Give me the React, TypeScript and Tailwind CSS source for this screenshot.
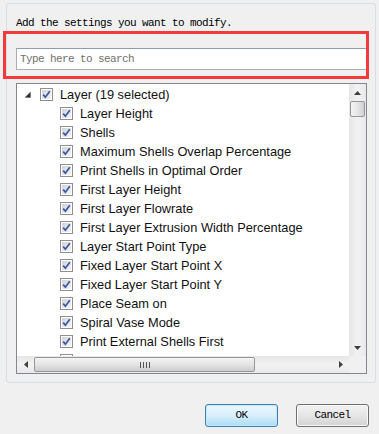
import React from "react";

// Win7-style "add settings" dialog with a checkbox tree
const items = [
  "Layer Height",
  "Shells",
  "Maximum Shells Overlap Percentage",
  "Print Shells in Optimal Order",
  "First Layer Height",
  "First Layer Flowrate",
  "First Layer Extrusion Width Percentage",
  "Layer Start Point Type",
  "Fixed Layer Start Point X",
  "Fixed Layer Start Point Y",
  "Place Seam on",
  "Spiral Vase Mode",
  "Print External Shells First",
  "Print Infill First",
];

const CheckBox = () => (
  <svg width="13" height="13" viewBox="0 0 13 13" className="shrink-0">
    <defs>
      <linearGradient id="cbg" x1="0" y1="0" x2="1" y2="1">
        <stop offset="0" stopColor="#cfd3d9" />
        <stop offset="1" stopColor="#f4f4f4" />
      </linearGradient>
    </defs>
    <rect x="0.5" y="0.5" width="12" height="12" fill="#fff" stroke="#8e8f8f" />
    <rect x="2" y="2" width="9" height="9" fill="url(#cbg)" />
    <path d="M3.2 6.6 L5.4 9.2 L9.8 3.2" fill="none" stroke="#3a56a0" strokeWidth="1.7" />
  </svg>
);

const Arrow = ({ dir }: { dir: "up" | "down" | "left" | "right" }) => {
  const pts = {
    up: "0,4 7,4 3.5,0",
    down: "0,0 7,0 3.5,4",
    left: "4,0 4,7 0,3.5",
    right: "0,0 0,7 4,3.5",
  }[dir];
  const w = dir === "up" || dir === "down" ? 7 : 4;
  const h = dir === "up" || dir === "down" ? 4 : 7;
  return (
    <svg width={w} height={h} viewBox={`0 0 ${w} ${h}`}>
      <polygon points={pts} fill="#3e3e3e" />
    </svg>
  );
};

export default function App() {
  return (
    <div className="relative w-[379px] h-[434px] overflow-hidden bg-[#f0f0f0] pt-[3px] pl-[6px]">
      <div className="w-[370px] h-[380px] rounded-[3px] border border-[#d5dfe5] pl-[9px] pt-[11px]">
        <div className="h-[16px] leading-[16px] text-[11px] tracking-[-0.6px] text-black font-['Liberation_Mono',monospace]">
          Add the settings you want to modify.
        </div>
        <input
          className="mt-[17px] block w-[351px] h-[22px] border border-[#abadb3] border-t-[#8f9db0] bg-white px-[3px] text-[11px] tracking-[-0.6px] font-['Liberation_Mono',monospace] outline-none placeholder:text-[#707070]"
          placeholder="Type here to search"
        />
        <div className="mt-[13px] w-[351px] h-[291px] border border-[#828790] bg-white flex flex-col">
          <div className="flex h-[272px]">
            <div className="flex-1 overflow-hidden pt-[1px] font-['Liberation_Sans',Arial,sans-serif] text-[12.8px] text-[#111]">
              <div className="flex items-center h-[19px] pl-[8px]">
                <svg width="6" height="6" viewBox="0 0 6 6" className="shrink-0">
                  <polygon points="5.5,0 5.5,5.5 0,5.5" fill="#2a2a2a" stroke="#6b6b6b" strokeWidth="0.5" />
                </svg>
                <div className="ml-[9px]">
                  <CheckBox />
                </div>
                <span className="ml-[7px] whitespace-nowrap">Layer (19 selected)</span>
              </div>
              {items.map((label) => (
                <div key={label} className="flex items-center h-[19px] pl-[43px]">
                  <CheckBox />
                  <span className="ml-[7px] whitespace-nowrap">{label}</span>
                </div>
              ))}
            </div>
            <div className="w-[17px] flex flex-col bg-gradient-to-r from-[#e6e6e6] via-[#f2f2f2] to-[#e9e9e9]">
              <div className="h-[17px] flex items-center justify-center">
                <Arrow dir="up" />
              </div>
              <div className="mx-[1px] h-[16px] rounded-[2px] border border-[#979797] bg-gradient-to-r from-[#f4f4f4] via-[#e6e6e6] to-[#cfcfcf]" />
              <div className="flex-1" />
              <div className="h-[17px] flex items-center justify-center">
                <Arrow dir="down" />
              </div>
            </div>
          </div>
          <div className="flex h-[17px]">
            <div className="flex-1 flex bg-gradient-to-b from-[#e6e6e6] via-[#f2f2f2] to-[#e9e9e9]">
              <div className="w-[17px] flex items-center justify-center">
                <Arrow dir="left" />
              </div>
              <div className="my-[1px] w-[221px] rounded-[2px] border border-[#979797] bg-gradient-to-b from-[#f4f4f4] via-[#e4e4e4] to-[#cdcdcd] flex items-center justify-center gap-[2px]">
                <span className="w-px h-[6px] bg-[#555]" />
                <span className="w-px h-[6px] bg-[#555]" />
                <span className="w-px h-[6px] bg-[#555]" />
                <span className="w-px h-[6px] bg-[#555]" />
              </div>
              <div className="flex-1" />
              <div className="w-[17px] flex items-center justify-center">
                <Arrow dir="right" />
              </div>
            </div>
            <div className="w-[17px] bg-[#f0f0f0]" />
          </div>
        </div>
      </div>
      <div className="mt-[21px] flex justify-end gap-[18px] pr-[10px] font-['Liberation_Mono',monospace] text-[11px] tracking-[-0.6px] text-black">
        <button className="w-[73px] h-[23px] rounded-[3px] border border-[#3c7fb1] bg-gradient-to-b from-[#eaf6fd] via-[#d9f0fc] to-[#a9dbf6] shadow-[inset_0_0_0_1px_#c5e8fa]">
          OK
        </button>
        <button className="w-[73px] h-[23px] rounded-[3px] border border-[#707070] bg-gradient-to-b from-[#f2f2f2] via-[#e6e6e6] to-[#d2d2d2] shadow-[inset_0_0_0_1px_#fafafa]">
          Cancel
        </button>
      </div>
      <div className="absolute left-[3px] top-[31px] w-[366px] h-[48px] border-[3px] border-[#f23a3a] pointer-events-none" />
    </div>
  );
}
